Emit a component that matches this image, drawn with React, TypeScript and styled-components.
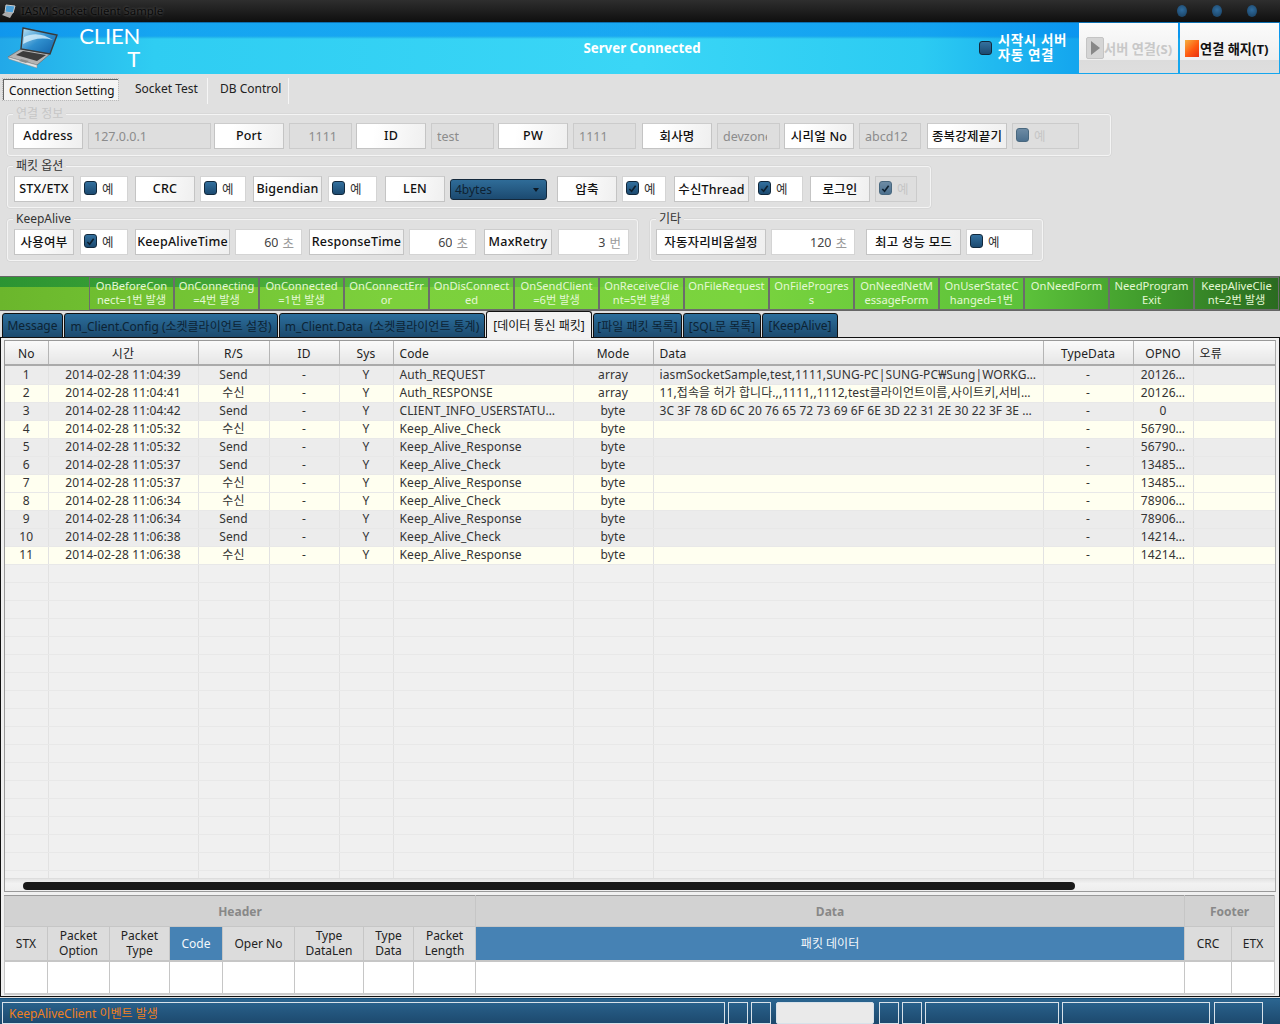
import React from 'react';
import styled, { createGlobalStyle } from 'styled-components';

const Global = createGlobalStyle`
  html, body { margin: 0; padding: 0; background: #e0e0e0; }
  body { font-family: "Noto Sans", "Noto Sans CJK KR", sans-serif; font-size: 12px; color: #222; }
  * { box-sizing: border-box; }
`;

const Page = styled.div`
  width: 1280px; height: 1024px; overflow: hidden; display: flex; flex-direction: column; background: #e0e0e0;
`;
const TitleBar = styled.div`
  height: 23px; flex: none; display: flex; align-items: center; padding: 0 23px 1px 1px;
  background: linear-gradient(#2e2e2e, #0f0f0f); border-bottom: 1px solid #0c70b0;
`;
const TitleText = styled.span`
  margin-left: 4px; flex: 1; color: #0a0a0a; font-size: 11.4px; text-shadow: 0 0 3px rgba(255,255,255,.3);
`;
const Dot = styled.span`
  width: 10px; height: 12px; border-radius: 50%; margin-left: 25px;
  background: radial-gradient(circle at 50% 40%, #2f6c9e, #173c5c);
`;
const Header = styled.div`
  height: 51px; flex: none; display: flex; align-items: stretch; position: relative;
  background:
    linear-gradient(rgba(5,140,240,.62) 0, rgba(5,140,240,.62) 13px, rgba(0,120,220,.35) 14px, rgba(0,0,0,0) 16px),
    linear-gradient(90deg, #22a8e8 0, #2fcdf2 12%, #3ad6f6 50%, #2ccbf2 72%, #14a6ee 84%);
`;
const LogoIcon = styled.svg`
  width: 62px; height: 51px; flex: none; margin-left: 4px;
`;
const LogoText = styled.div`
  width: 62px; margin-left: 12px; padding-top: 1px; color: #fff; font-family: "Lato", sans-serif; font-weight: 400; font-size: 22px; line-height: 23px;
  word-break: break-all; text-align: right; letter-spacing: -.2px;
`;
const ConnStatus = styled.div`
  width: 200px; position: absolute; left: 542px; top: 15px; text-align: center; color: #fff; font-weight: 700; font-size: 13.3px; line-height: 20px;
`;
const HeaderRight = styled.div`
  margin-left: auto; display: flex; align-items: stretch; gap: 2px; padding: 0 1px 1px 0;
`;
const AutoWrap = styled.div`
  display: flex; align-items: center; gap: 6px; margin-right: 10px; color: #fff; font-weight: 700; font-size: 13.5px; line-height: 15px; letter-spacing: .6px;
`;
const HeadBtn = styled.div<{ $disabled?: boolean }>`
  width: 99px; display: flex; align-items: center; gap: 1px; padding-left: ${p => p.$disabled ? 7 : 5}px;
  font-weight: 700; font-size: 13.2px; white-space: nowrap; color: ${p => p.$disabled ? '#c8c8c8' : '#111'};
  background: linear-gradient(#fbfbfb 0, #efefef 74%, #dcdcdc 75%, #dedede 100%);
`;
const PlayBox = styled.span`
  width: 18px; height: 22px; margin-right: -1px; background: #d5d5d5; border: 1px solid #c4c4c4; border-radius: 2px; display: flex; align-items: center; justify-content: center; flex: none;
  &::after { content: ''; border-left: 9px solid #888; border-top: 7px solid transparent; border-bottom: 7px solid transparent; }
`;
const StopBox = styled.span`
  width: 14px; height: 17px; background: linear-gradient(135deg, #f4b040, #ff5a10 55%, #e83010); flex: none;
`;

const ToolTabs = styled.div`
  height: 26px; margin: 4px 0 10px 3px; display: flex; align-items: flex-start;
`;
const ToolTab = styled.div<{ $w: number; $on?: boolean }>`
  width: ${p => p.$w}px; padding-left: ${p => p.$on ? 5 : 12}px; padding-top: ${p => p.$on ? 0 : 1}px; line-height: 20px; white-space: nowrap; color: #222;
  font-size: ${p => p.$on ? 11.8 : 12}px;
  border-right: ${p => p.$on ? 'none' : '1px solid #f6f6f6'};
  ${p => p.$on && 'margin-top:1px; margin-right:5px; border-top: 1px solid #666; border-left: 1px solid #666; background: #f4f4f4; color:#111; outline: 1px dotted #bbb;'}
  height: ${p => p.$on ? 21 : 26}px;
`;

const Settings = styled.div`
  display: flex; flex-direction: column; padding-left: 7px; gap: 10px;
`;
const GroupRow = styled.div`
  display: flex; gap: 12px; margin-top: 1px;
`;
const Group = styled.fieldset<{ $w: number; $pad: number; $top?: number }>`
  width: ${p => p.$w}px; height: 42px; margin: 0; padding: ${p => p.$top ?? 9}px 0 0 ${p => p.$pad}px; position: relative; display: flex; align-items: flex-start;
  border: 1px solid #f4f4f4; border-radius: 3px; box-shadow: 0 0 0 .5px #d0d0d0;
`;
const Legend = styled.span<{ $off?: boolean }>`
  position: absolute; left: 5px; top: -9px; padding: 0 3px; background: #e0e0e0; line-height: 16px; font-size: 12px; color: ${p => p.$off ? '#c6c6c6' : '#333'};
`;
const Label = styled.div<{ $w: number; $ml: number }>`
  width: ${p => p.$w}px; height: 26px; margin-left: ${p => p.$ml}px; flex: none; display: flex; align-items: center; justify-content: center; white-space: nowrap;
  background: linear-gradient(100deg, #fff 25%, #efefef 100%); border: 1px solid #c4c4c4; border-top-color: #ccc; font-size: 12.5px; font-weight: 500; color: #111; letter-spacing: .2px; padding-bottom: 2px;
`;
const Value = styled.div<{ $w: number; $ml: number; $right?: boolean; $off?: boolean; $pr?: number }>`
  width: ${p => p.$w}px; height: 26px; margin-left: ${p => p.$ml}px; flex: none; display: flex; align-items: center; white-space: nowrap;
  justify-content: ${p => p.$right ? 'flex-end' : 'flex-start'}; padding: 1px ${p => p.$pr ?? 7}px 0 ${p => p.$right ? 0 : 5}px;
  border: 1px solid ${p => p.$off ? '#cbcbcb' : '#d4d4d4'}; background: ${p => p.$off ? '#dedede' : '#fff'}; color: ${p => p.$off ? '#8c8c8c' : '#444'}; font-size: 12.5px;
`;
const ValueText = styled.span<{ $max: number }>`
  display: block; max-width: ${p => p.$max}px; overflow: hidden;
`;
const Unit = styled.span`
  margin-left: 4px; color: #9a9a9a;
`;
const CheckCell = styled.div<{ $w: number; $ml: number; $off?: boolean }>`
  width: ${p => p.$w}px; height: 26px; margin-left: ${p => p.$ml}px; flex: none; display: flex; align-items: center; gap: 5px; padding-left: 3px; padding-bottom: 2px;
  border: 1px solid ${p => p.$off ? '#cbcbcb' : '#d4d4d4'}; background: ${p => p.$off ? '#dedede' : '#fff'}; color: ${p => p.$off ? '#c6c6c6' : '#333'}; font-size: 12.5px;
`;
const Box = styled.span<{ $off?: boolean }>`
  width: 13px; height: 14px; flex: none; border-radius: 3px; display: flex; align-items: center; justify-content: center;
  border: 1px solid ${p => p.$off ? '#49687f' : '#12293d'}; background: ${p => p.$off ? 'linear-gradient(#6d8ba4,#4c708e)' : 'linear-gradient(#33709e,#1c4a70)'};
`;
const SelectBox = styled.div<{ $w: number; $ml: number }>`
  width: ${p => p.$w}px; height: 21px; margin: 3px 0 0 ${p => p.$ml}px; flex: none; display: flex; align-items: center; justify-content: space-between; padding: 0 7px 0 4px;
  border: 1px solid #14293c; border-radius: 3px; background: linear-gradient(#2f6c98, #1c4a70); color: #0e2233; font-size: 12px;
  &::after { content: ''; border-top: 4px solid #0c1a26; border-left: 3px solid transparent; border-right: 3px solid transparent; }
`;

const Events = styled.div`
  height: 35px; margin-top: 15px; flex: none; display: flex; padding-left: 89px; border: 1px solid #666; border-width: 1px 0 1px 0;
  background:
    linear-gradient(90deg, rgba(0,125,55,.6) 0, rgba(0,125,55,.45) 15%, rgba(0,125,55,.12) 45%, rgba(0,125,55,0) 60%) 0 0 / 100% 10px no-repeat,
    linear-gradient(90deg, #6bb62c 0, #6fbe30 90px, #7cd03c 30%, #7ad43e 58%, #5cc23a 80%, #3f9a2c 90%, #2a6a20 100%);
`;
const EventCell = styled.div`
  width: 85px; flex: none; border: 1px solid #6c6c6c; padding: 1px 0 0; text-align: center; white-space: pre-line; overflow: hidden;
  color: #e4f8d4; font-size: 11.2px; line-height: 13.5px;
`;

const DocTabs = styled.div`
  height: 27px; flex: none; padding-left: 2px; display: flex; align-items: flex-end; gap: 1px; position: relative; margin-bottom: -1px;
`;
const DocTab = styled.div<{ $w: number; $on?: boolean }>`
  width: ${p => p.$w}px; height: ${p => p.$on ? 27 : 25}px; flex: none; display: flex; align-items: center; justify-content: center; white-space: pre; font-size: 12px;
  border: 1px solid #111; border-bottom: ${p => p.$on ? 'none' : '1px solid #111'}; border-radius: 3px 3px 0 0;
  background: ${p => p.$on ? '#f2f2f2' : 'linear-gradient(#2b6e9c,#1c4a6e)'}; color: ${p => p.$on ? '#111' : '#0c2334'};
  position: relative; z-index: ${p => p.$on ? 2 : 1};
`;
const Panel = styled.div`
  height: 660px; flex: none; border: 1px solid #111; padding: 2px 3px; display: flex; flex-direction: column; background: #f0f0f0;
`;
const GridWrap = styled.div`
  height: 552px; flex: none; display: flex; flex-direction: column; border: 1px solid #999; border-right-color: #aaa; background: #f0f0f0; overflow: hidden;
`;
const GridBody = styled.div`
  height: 512px; flex: none; overflow: hidden;
`;
const Table = styled.table`
  width: 1270px; table-layout: fixed; border-collapse: collapse; font-size: 12px; letter-spacing: .1px;
`;
const Th = styled.th<{ $left?: boolean }>`
  height: 24px; padding: 2px 6px 0; line-height: 16px; font-weight: 400; color: #222; text-align: ${p => p.$left ? 'left' : 'center'};
  background: linear-gradient(#fafafa, #e6e6e6); border-right: 1px solid #b5b5b5; border-bottom: 2px solid #aaa; white-space: nowrap;
`;
const Tr = styled.tr<{ $ivory?: boolean; $blank?: boolean }>`
  background: ${p => p.$blank ? '#f0f0f0' : p.$ivory ? '#fffff0' : '#ececec'};
`;
const Td = styled.td<{ $left?: boolean }>`
  height: 18px; padding: 0 6px; border-right: 1px solid #e2e2e2; border-bottom: 1px solid #e8e8e8; color: #333; line-height: 16px;
  text-align: ${p => p.$left ? 'left' : 'center'}; white-space: nowrap; overflow: hidden;
`;
const ScrollBar = styled.div`
  height: 16px; flex: none; padding: 3px 0 0 18px; background: linear-gradient(#e4e4e4, #f2f2f2 30%, #ececec); border-top: 1px solid #ddd;
`;
const Thumb = styled.div`
  width: 1052px; height: 8px; border-radius: 4px; background: #191919;
`;
const PacketTable = styled.table`
  width: 1270px; height: 99px; margin-top: 3px; table-layout: fixed; border-collapse: collapse; font-size: 12px;
`;
const PHead = styled.th`
  height: 31px; padding-top: 1px; background: #d2d2d2; color: #888; font-weight: 700; font-size: 12px; border: 1px solid #c6c6c6; border-top: 1px solid #999;
`;
const PCol = styled.td<{ $blue?: boolean }>`
  height: 34px; padding: 0; text-align: center; line-height: 15px; white-space: pre-line; border: 1px solid #c6c6c6; border-bottom: 2px solid #c6c6c6;
  background: ${p => p.$blue ? '#4682b4' : '#dcdcdc'}; color: ${p => p.$blue ? '#f4f8fb' : '#222'};
`;
const PCell = styled.td`
  height: 33px; background: #fff; border: 1px solid #c6c6c6; border-bottom: 2px solid #ccc;
`;
const Status = styled.div`
  flex: 1; display: flex; margin-top: 1px; padding: 3px 0 2px 2px; background: linear-gradient(#2b6590, #1b466a); border-top: 1px solid #15507c;
`;
const StatusCell = styled.div<{ $w: number; $ml?: number; $light?: boolean }>`
  width: ${p => p.$w}px; margin-left: ${p => p.$ml ?? 0}px; flex: none; padding: 1px 0 0 6px; line-height: 19px; color: #f08020; font-size: 12px; white-space: nowrap;
  border: 1px solid #d8e2ea; ${p => p.$light && 'background:#eaeaea; border-radius:2px;'}
`;

const Tick = () => (
  <svg width="9" height="9" viewBox="0 0 10 10"><path d="M1.5 5.5 L4 8 L8.5 2" fill="none" stroke="#0d1f2e" strokeWidth="1.8" /></svg>
);
type Item = { k: 'l' | 'v' | 'c' | 's'; w: number; ml: number; t?: string; r?: boolean; off?: boolean; on?: boolean; u?: string; pr?: number };
const Items = ({ list }: { list: Item[] }) => (
  <>
    {list.map((i, n) => {
      if (i.k === 'l') return <Label key={n} $w={i.w} $ml={i.ml}>{i.t}</Label>;
      if (i.k === 's') return <SelectBox key={n} $w={i.w} $ml={i.ml}>{i.t}</SelectBox>;
      if (i.k === 'c') return <CheckCell key={n} $w={i.w} $ml={i.ml} $off={i.off}><Box $off={i.off}>{i.on && <Tick />}</Box>예</CheckCell>;
      return <Value key={n} $w={i.w} $ml={i.ml} $right={i.r} $off={i.off} $pr={i.pr}><ValueText $max={i.w - 19}>{i.t}</ValueText>{i.u && <Unit>{i.u}</Unit>}</Value>;
    })}
  </>
);

const g1: Item[] = [
  { k: 'l', w: 70, ml: 0, t: 'Address' }, { k: 'v', w: 123, ml: 5, t: '127.0.0.1', off: true },
  { k: 'l', w: 70, ml: 3, t: 'Port' }, { k: 'v', w: 63, ml: 5, t: '1111', r: true, off: true, pr: 14 },
  { k: 'l', w: 70, ml: 4, t: 'ID' }, { k: 'v', w: 63, ml: 5, t: 'test', off: true },
  { k: 'l', w: 70, ml: 4, t: 'PW' }, { k: 'v', w: 63, ml: 5, t: '1111', off: true },
  { k: 'l', w: 70, ml: 6, t: '회사명' }, { k: 'v', w: 63, ml: 5, t: 'devzone', off: true },
  { k: 'l', w: 70, ml: 4, t: '시리얼 No' }, { k: 'v', w: 62, ml: 5, t: 'abcd123', off: true },
  { k: 'l', w: 80, ml: 6, t: '종복강제끝기' }, { k: 'c', w: 67, ml: 5, off: true },
];
const g2: Item[] = [
  { k: 'l', w: 60, ml: 0, t: 'STX/ETX' }, { k: 'c', w: 48, ml: 6 },
  { k: 'l', w: 60, ml: 7, t: 'CRC' }, { k: 'c', w: 46, ml: 5 },
  { k: 'l', w: 69, ml: 7, t: 'Bigendian' }, { k: 'c', w: 49, ml: 6 },
  { k: 'l', w: 60, ml: 8, t: 'LEN' }, { k: 's', w: 97, ml: 5, t: '4bytes' },
  { k: 'l', w: 60, ml: 10, t: '압축' }, { k: 'c', w: 44, ml: 5, on: true },
  { k: 'l', w: 75, ml: 8, t: '수신Thread' }, { k: 'c', w: 49, ml: 5, on: true },
  { k: 'l', w: 60, ml: 7, t: '로그인' }, { k: 'c', w: 42, ml: 5, off: true, on: true },
];
const g3: Item[] = [
  { k: 'l', w: 60, ml: 0, t: '사용여부' }, { k: 'c', w: 48, ml: 6, on: true },
  { k: 'l', w: 95, ml: 7, t: 'KeepAliveTime' }, { k: 'v', w: 67, ml: 5, t: '60', u: '초', r: true },
  { k: 'l', w: 95, ml: 7, t: 'ResponseTime' }, { k: 'v', w: 67, ml: 5, t: '60', u: '초', r: true },
  { k: 'l', w: 68, ml: 8, t: 'MaxRetry' }, { k: 'v', w: 71, ml: 6, t: '3', u: '번', r: true },
];
const g4: Item[] = [
  { k: 'l', w: 110, ml: 0, t: '자동자리비움설정' }, { k: 'v', w: 84, ml: 5, t: '120', u: '초', r: true },
  { k: 'l', w: 95, ml: 11, t: '최고 성능 모드' }, { k: 'c', w: 67, ml: 5 },
];

const events = [
  'OnBeforeCon\nnect=1번 발생', 'OnConnecting\n=4번 발생', 'OnConnected\n=1번 발생', 'OnConnectErr\nor', 'OnDisConnect\ned', 'OnSendClient\n=6번 발생',
  'OnReceiveClie\nnt=5번 발생', 'OnFileRequest', 'OnFileProgres\ns', 'OnNeedNetM\nessageForm', 'OnUserStateC\nhanged=1번', 'OnNeedForm', 'NeedProgram\nExit', 'KeepAliveClie\nnt=2번 발생',
];
const docTabs: [string, number, boolean?][] = [
  ['Message', 61], ['m_Client.Config (소켓클라이언트 설정)', 214], ['m_Client.Data  (소켓클라이언트 통계)', 206], ['[데이터 통신 패킷]', 106, true],
  ['[파일 패킷 목록]', 89], ['[SQL문 목록]', 78], ['[KeepAlive]', 76],
];
const cols = [43, 150, 71, 70, 54, 180, 80, 390, 90, 60, 82];
const heads: [string, boolean?][] = [['No'], ['시간'], ['R/S'], ['ID'], ['Sys'], ['Code', true], ['Mode'], ['Data', true], ['TypeData'], ['OPNO'], ['오류', true]];
const K = 'Keep_Alive_Check', R = 'Keep_Alive_Response';
const rows: [string, string, string, string, string, string][] = [
  ['11:04:39', 'Send', 'Auth_REQUEST', 'array', 'iasmSocketSample,test,1111,SUNG-PC|SUNG-PC₩Sung|WORKG…', '20126…'],
  ['11:04:41', '수신', 'Auth_RESPONSE', 'array', '11,접속을 허가 합니다.,,1111,,1112,test클라이언트이름,사이트키,서비…', '20126…'],
  ['11:04:42', 'Send', 'CLIENT_INFO_USERSTATU…', 'byte', '3C 3F 78 6D 6C 20 76 65 72 73 69 6F 6E 3D 22 31 2E 30 22 3F 3E …', '0'],
  ['11:05:32', '수신', K, 'byte', '', '56790…'], ['11:05:32', 'Send', R, 'byte', '', '56790…'],
  ['11:05:37', 'Send', K, 'byte', '', '13485…'], ['11:05:37', '수신', R, 'byte', '', '13485…'],
  ['11:06:34', '수신', K, 'byte', '', '78906…'], ['11:06:34', 'Send', R, 'byte', '', '78906…'],
  ['11:06:38', 'Send', K, 'byte', '', '14214…'], ['11:06:38', '수신', R, 'byte', '', '14214…'],
];
const pWidths = [43, 62, 60, 53, 72, 69, 50, 62, 709, 47, 43];
const pCols: [string, boolean?][] = [['STX'], ['Packet\nOption'], ['Packet\nType'], ['Code', true], ['Oper No'], ['Type\nDataLen'], ['Type\nData'], ['Packet\nLength'], ['패킷 데이터', true], ['CRC'], ['ETX']];
const statusCells: [number, number, boolean?][] = [[20, 3], [20, 3], [98, 5, true], [20, 5], [20, 3], [134, 3], [148, 3], [49, 4]];

const Laptop = () => (
  <LogoIcon viewBox="0 0 62 51">
    <defs>
      <linearGradient id="scr" x1="0" y1="0" x2="1" y2="1"><stop offset="0" stopColor="#bfe6f7" /><stop offset=".5" stopColor="#2f8fce" /><stop offset="1" stopColor="#0f5fa6" /></linearGradient>
    </defs>
    <polygon points="4,34 17,26 46,31 33,42" fill="#b4b4b4" stroke="#6a6a6a" strokeWidth=".7" />
    <polygon points="4,34 33,42 33,45 5,36" fill="#e4e4e4" stroke="#8a8a8a" strokeWidth=".5" />
    <polygon points="12,32 19,28 42,32 33,38" fill="#3c3c3c" />
    <polygon points="17,36 25,38 22,40 15,38" fill="#8c8c8c" />
    <polygon points="19,5 53,12 46,31 17,26" fill="url(#scr)" stroke="#3a3a3a" strokeWidth="1.4" />
    <path d="M20 14 C30 9 40 11 49 17 C38 14 28 16 19 21 Z" fill="#d8f0fb" opacity=".8" />
  </LogoIcon>
);
const MiniIcon = () => (
  <svg width="16" height="16" viewBox="0 0 16 16"><polygon points="5,2 14,3 12,10 4,9" fill="#4d9fd6" stroke="#ccc" /><polygon points="1,12 4,9 12,10 9,15" fill="#aaa" /></svg>
);

export default function App() {
  return (
    <Page>
      <Global />
      <TitleBar>
        <MiniIcon />
        <TitleText>IASM Socket Client Sample</TitleText>
        <Dot /><Dot /><Dot />
      </TitleBar>
      <Header>
        <Laptop />
        <LogoText>CLIENT</LogoText>
        <ConnStatus>Server Connected</ConnStatus>
        <HeaderRight>
          <AutoWrap><Box />시작시 서버<br />자동 연결</AutoWrap>
          <HeadBtn $disabled><PlayBox />서버 연결(S)</HeadBtn>
          <HeadBtn><StopBox />연결 해지(T)</HeadBtn>
        </HeaderRight>
      </Header>
      <ToolTabs>
        <ToolTab $w={115} $on>Connection Setting</ToolTab>
        <ToolTab $w={85}>Socket Test</ToolTab>
        <ToolTab $w={81}>DB Control</ToolTab>
      </ToolTabs>
      <Settings>
        <Group $w={1104} $pad={5} $top={8}><Legend $off>연결 정보</Legend><Items list={g1} /></Group>
        <Group $w={924} $pad={6}><Legend>패킷 옵션</Legend><Items list={g2} /></Group>
        <GroupRow>
          <Group $w={631} $pad={6}><Legend>KeepAlive</Legend><Items list={g3} /></Group>
          <Group $w={393} $pad={5}><Legend>기타</Legend><Items list={g4} /></Group>
        </GroupRow>
      </Settings>
      <Events>{events.map(e => <EventCell key={e}>{e}</EventCell>)}</Events>
      <DocTabs>{docTabs.map(([t, w, on]) => <DocTab key={t} $w={w} $on={on}>{t}</DocTab>)}</DocTabs>
      <Panel>
        <GridWrap>
          <Table>
            <colgroup>{cols.map((c, i) => <col key={i} width={c} />)}</colgroup>
            <thead><tr>{heads.map(([h, l]) => <Th key={h} $left={l}>{h}</Th>)}</tr></thead>
          </Table>
          <GridBody>
            <Table>
              <colgroup>{cols.map((c, i) => <col key={i} width={c} />)}</colgroup>
              <tbody>
                {rows.map((r, i) => (
                  <Tr key={i} $ivory={r[1] === '수신'}>
                    <Td>{i + 1}</Td><Td>2014-02-28 {r[0]}</Td><Td>{r[1]}</Td><Td>-</Td><Td>Y</Td>
                    <Td $left>{r[2]}</Td><Td>{r[3]}</Td><Td $left>{r[4]}</Td><Td>-</Td><Td>{r[5]}</Td><Td />
                  </Tr>
                ))}
                {Array.from({ length: 18 }, (_, i) => (
                  <Tr key={i} $blank>{cols.map((_c, j) => <Td key={j} />)}</Tr>
                ))}
              </tbody>
            </Table>
          </GridBody>
          <ScrollBar><Thumb /></ScrollBar>
        </GridWrap>
        <PacketTable>
          <colgroup>{pWidths.map((c, i) => <col key={i} width={c} />)}</colgroup>
          <thead><tr><PHead colSpan={8}>Header</PHead><PHead>Data</PHead><PHead colSpan={2}>Footer</PHead></tr></thead>
          <tbody>
            <tr>{pCols.map(([t, b]) => <PCol key={t} $blue={b}>{t}</PCol>)}</tr>
            <tr>{pCols.map(([t]) => <PCell key={t} />)}</tr>
          </tbody>
        </PacketTable>
      </Panel>
      <Status>
        <StatusCell $w={723}>KeepAliveClient 이벤트 발생</StatusCell>
        {statusCells.map(([w, ml, l], i) => <StatusCell key={i} $w={w} $ml={ml} $light={l} />)}
      </Status>
    </Page>
  );
}
